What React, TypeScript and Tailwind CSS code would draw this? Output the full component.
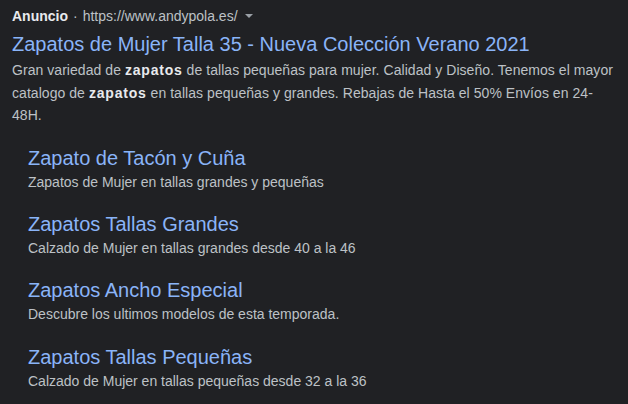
import React from 'react';

const sitelinks = [
  { title: 'Zapato de Tacón y Cuña', desc: 'Zapatos de Mujer en tallas grandes y pequeñas' },
  { title: 'Zapatos Tallas Grandes', desc: 'Calzado de Mujer en tallas grandes desde 40 a la 46' },
  { title: 'Zapatos Ancho Especial', desc: 'Descubre los ultimos modelos de esta temporada.' },
  { title: 'Zapatos Tallas Pequeñas', desc: 'Calzado de Mujer en tallas pequeñas desde 32 a la 36' },
];

export default function App() {
  return (
    <div
      className="w-[628px] h-[404px] bg-[#202124] overflow-hidden pl-[12px] pr-[2px] pt-[6px]"
      style={{ fontFamily: '"Liberation Sans", Arial, sans-serif' }}
    >
      {/* cabecera del anuncio */}
      <div className="flex items-center h-[20px] text-[14px] text-[#bdc1c6]">
        <span className="font-bold text-[#e8eaed]">Anuncio</span>
        <span className="mx-[5px]">·</span>
        <span>https://www.andypola.es/</span>
        <svg className="ml-[6px]" width="10" height="10" viewBox="0 0 10 10">
          <path d="M1 3 L9 3 L5 7 Z" fill="#9aa0a6" />
        </svg>
      </div>

      <div className="mt-[5px] text-[20px] leading-[26px] text-[#8ab4f8]">
        Zapatos de Mujer Talla 35 - Nueva Colección Verano 2021
      </div>

      <p className="mt-[2px] text-[14px] leading-[22.5px] tracking-[0.05px] text-[#bdc1c6]">
        Gran variedad de <b className="font-extrabold tracking-[0.8px] text-[#e8eaed]">zapatos</b> de tallas pequeñas para mujer. Calidad y Diseño. Tenemos el mayor
        <br />
        catalogo de <b className="font-extrabold tracking-[0.8px] text-[#e8eaed]">zapatos</b> en tallas pequeñas y grandes. Rebajas de Hasta el 50% Envíos en 24-
        <br />
        48H.
      </p>

      {/* enlaces de sitio */}
      <div className="pl-[16px] mt-[18px] flex flex-col">
        {sitelinks.map((s) => (
          <div key={s.title} className="h-[66.4px]">
            <div className="text-[20px] leading-[26px] text-[#8ab4f8]">{s.title}</div>
            <div className="text-[14px] leading-[22px] text-[#bdc1c6]">{s.desc}</div>
          </div>
        ))}
      </div>
    </div>
  );
}
